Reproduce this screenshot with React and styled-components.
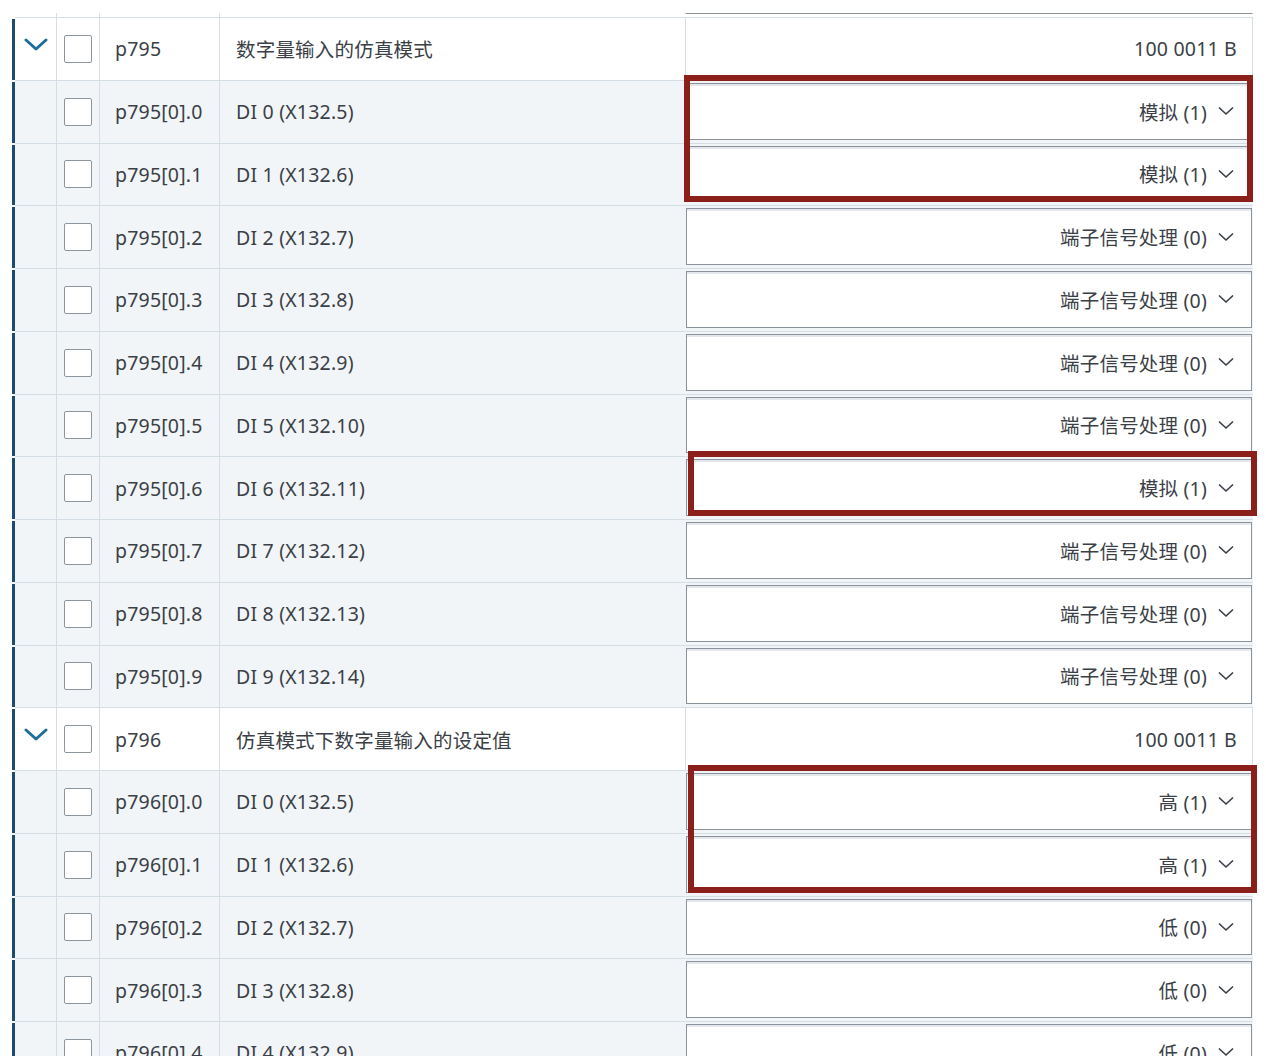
import React from "react"
import styled, { createGlobalStyle, css } from "styled-components"

const GlobalStyle = createGlobalStyle`
  html, body {
    margin: 0;
    padding: 0;
    background: #ffffff;
    overflow: hidden;
  }
  body {
    font-family: "Noto Sans", "Noto Sans CJK SC", sans-serif;
    color: #3a4046;
  }
`

const Page = styled.div`
  height: 1056px;
  padding: 13px 0 0 12px;
  box-sizing: border-box;
  overflow: hidden;
`

const Table = styled.div`
  width: 1241px;
  display: flex;
  flex-direction: column;
`

const Row = styled.div`
  display: flex;
  height: ${(p) => (p.$stub ? "4px" : "62.75px")};
  flex-shrink: 0;
  background: ${(p) => (p.$head ? "#ffffff" : "#f2f5f8")};
`

const Bar = styled.div`
  width: 3px;
  margin-top: 2px;
  background: ${(p) => (p.$hidden ? "transparent" : "#1b4b70")};
`

const Cell = styled.div`
  box-sizing: border-box;
  border-top: ${(p) => (p.$stub ? "none" : "1px solid #d5dde5")};
  display: flex;
  align-items: center;
  font-size: 19.5px;
  letter-spacing: 0.2px;
  white-space: nowrap;
`

const ToggleCell = styled(Cell)`
  width: 42px;
  border-right: 1px solid #d5dde5;
  justify-content: center;
  align-items: flex-start;
  padding-top: 20px;
`

const CheckCell = styled(Cell)`
  width: 43px;
  border-right: 1px solid #d5dde5;
  justify-content: center;
`

const ParamCell = styled(Cell)`
  width: 120px;
  border-right: 1px solid #d5dde5;
  padding-left: 15px;
`

const DescCell = styled(Cell)`
  width: 465px;
  padding-left: 16px;
`

const markStyles = {
  top: css`
    top: -6px;
    bottom: -1px;
    border-bottom: none;
  `,
  bottom: css`
    top: 0;
    bottom: 3px;
    border-top: none;
  `,
  single: css`
    top: -6px;
    bottom: 3px;
  `,
}

const ValueCell = styled(Cell)`
  position: relative;
  width: 568px;
  border-left: 1px solid ${(p) => (p.$head ? "#d5dde5" : "transparent")};
  border-right: 1px solid ${(p) => (p.$head ? "#d5dde5" : "transparent")};
  padding: ${(p) => (p.$head ? "0 15px 0 0" : "2px 0 3px 0")};
  justify-content: flex-end;
  align-items: stretch;
  ${(p) =>
    p.$stub &&
    css`
      border-top: 1px solid #8a939b;
      border-left-color: transparent;
    `}

  ${(p) =>
    p.$mark &&
    css`
      &::after {
        content: "";
        position: absolute;
        z-index: 2;
        left: ${p.$shift ? "2px" : "-2px"};
        right: ${p.$shift ? "-5px" : "-1px"};
        border: 6px solid #8b1f1a;
        pointer-events: none;
        ${markStyles[p.$mark]}
      }
    `}
`

const HeadValue = styled.span`
  align-self: center;
`

const Select = styled.div`
  flex: 1;
  display: flex;
  justify-content: flex-end;
  align-items: center;
  gap: 11px;
  padding-right: 17px;
  background: #ffffff;
  border: 1px solid #8a939b;
  box-shadow: inset 0 2px 0 #e4e8ec;
`

const Checkbox = styled.span`
  width: 28px;
  height: 28px;
  box-sizing: border-box;
  border: 1px solid #8d969e;
  border-radius: 2px;
  background: #ffffff;
`

const Chevron = ({ size = "big" }) =>
  size === "big" ? (
    <svg width="24" height="14" viewBox="0 0 24 14">
      <path
        d="M2 2 L12 11 L22 2"
        fill="none"
        stroke="#1d6f99"
        strokeWidth="3"
        strokeLinecap="round"
        strokeLinejoin="round"
      />
    </svg>
  ) : (
    <svg width="16" height="10" viewBox="0 0 16 10">
      <path
        d="M1.5 2 L8 8 L14.5 2"
        fill="none"
        stroke="#3b4148"
        strokeWidth="1.7"
        strokeLinecap="round"
        strokeLinejoin="round"
      />
    </svg>
  )

const groups = [
  {
    id: "p795",
    name: "数字量输入的仿真模式",
    value: "100 0011 B",
    items: Array.from({ length: 10 }, (_, i) => ({
      value: [0, 1, 6].includes(i) ? "模拟 (1)" : "端子信号处理 (0)",
      mark: i === 0 ? "top" : i === 1 ? "bottom" : i === 6 ? "single" : null,
      shift: i === 6,
    })),
  },
  {
    id: "p796",
    name: "仿真模式下数字量输入的设定值",
    value: "100 0011 B",
    items: Array.from({ length: 5 }, (_, i) => ({
      value: i < 2 ? "高 (1)" : "低 (0)",
      mark: i === 0 ? "top" : i === 1 ? "bottom" : null,
      shift: true,
    })),
  },
]

const App = () => {
  return (
    <>
      <GlobalStyle />
      <Page>
        <Table>
          <Row $stub $head>
            <Bar $hidden />
            <ToggleCell $stub />
            <CheckCell $stub />
            <ParamCell $stub />
            <DescCell $stub />
            <ValueCell $stub />
          </Row>
          {groups.map((g) => (
            <React.Fragment key={g.id}>
              <Row $head>
                <Bar />
                <ToggleCell>
                  <Chevron />
                </ToggleCell>
                <CheckCell>
                  <Checkbox />
                </CheckCell>
                <ParamCell>{g.id}</ParamCell>
                <DescCell>{g.name}</DescCell>
                <ValueCell $head>
                  <HeadValue>{g.value}</HeadValue>
                </ValueCell>
              </Row>
              {g.items.map((item, i) => (
                <Row key={i}>
                  <Bar />
                  <ToggleCell />
                  <CheckCell>
                    <Checkbox />
                  </CheckCell>
                  <ParamCell>{`${g.id}[0].${i}`}</ParamCell>
                  <DescCell>{`DI ${i} (X132.${5 + i})`}</DescCell>
                  <ValueCell $mark={item.mark} $shift={item.shift}>
                    <Select>
                      <span>{item.value}</span>
                      <Chevron size="small" />
                    </Select>
                  </ValueCell>
                </Row>
              ))}
            </React.Fragment>
          ))}
        </Table>
      </Page>
    </>
  )
}

export default App
